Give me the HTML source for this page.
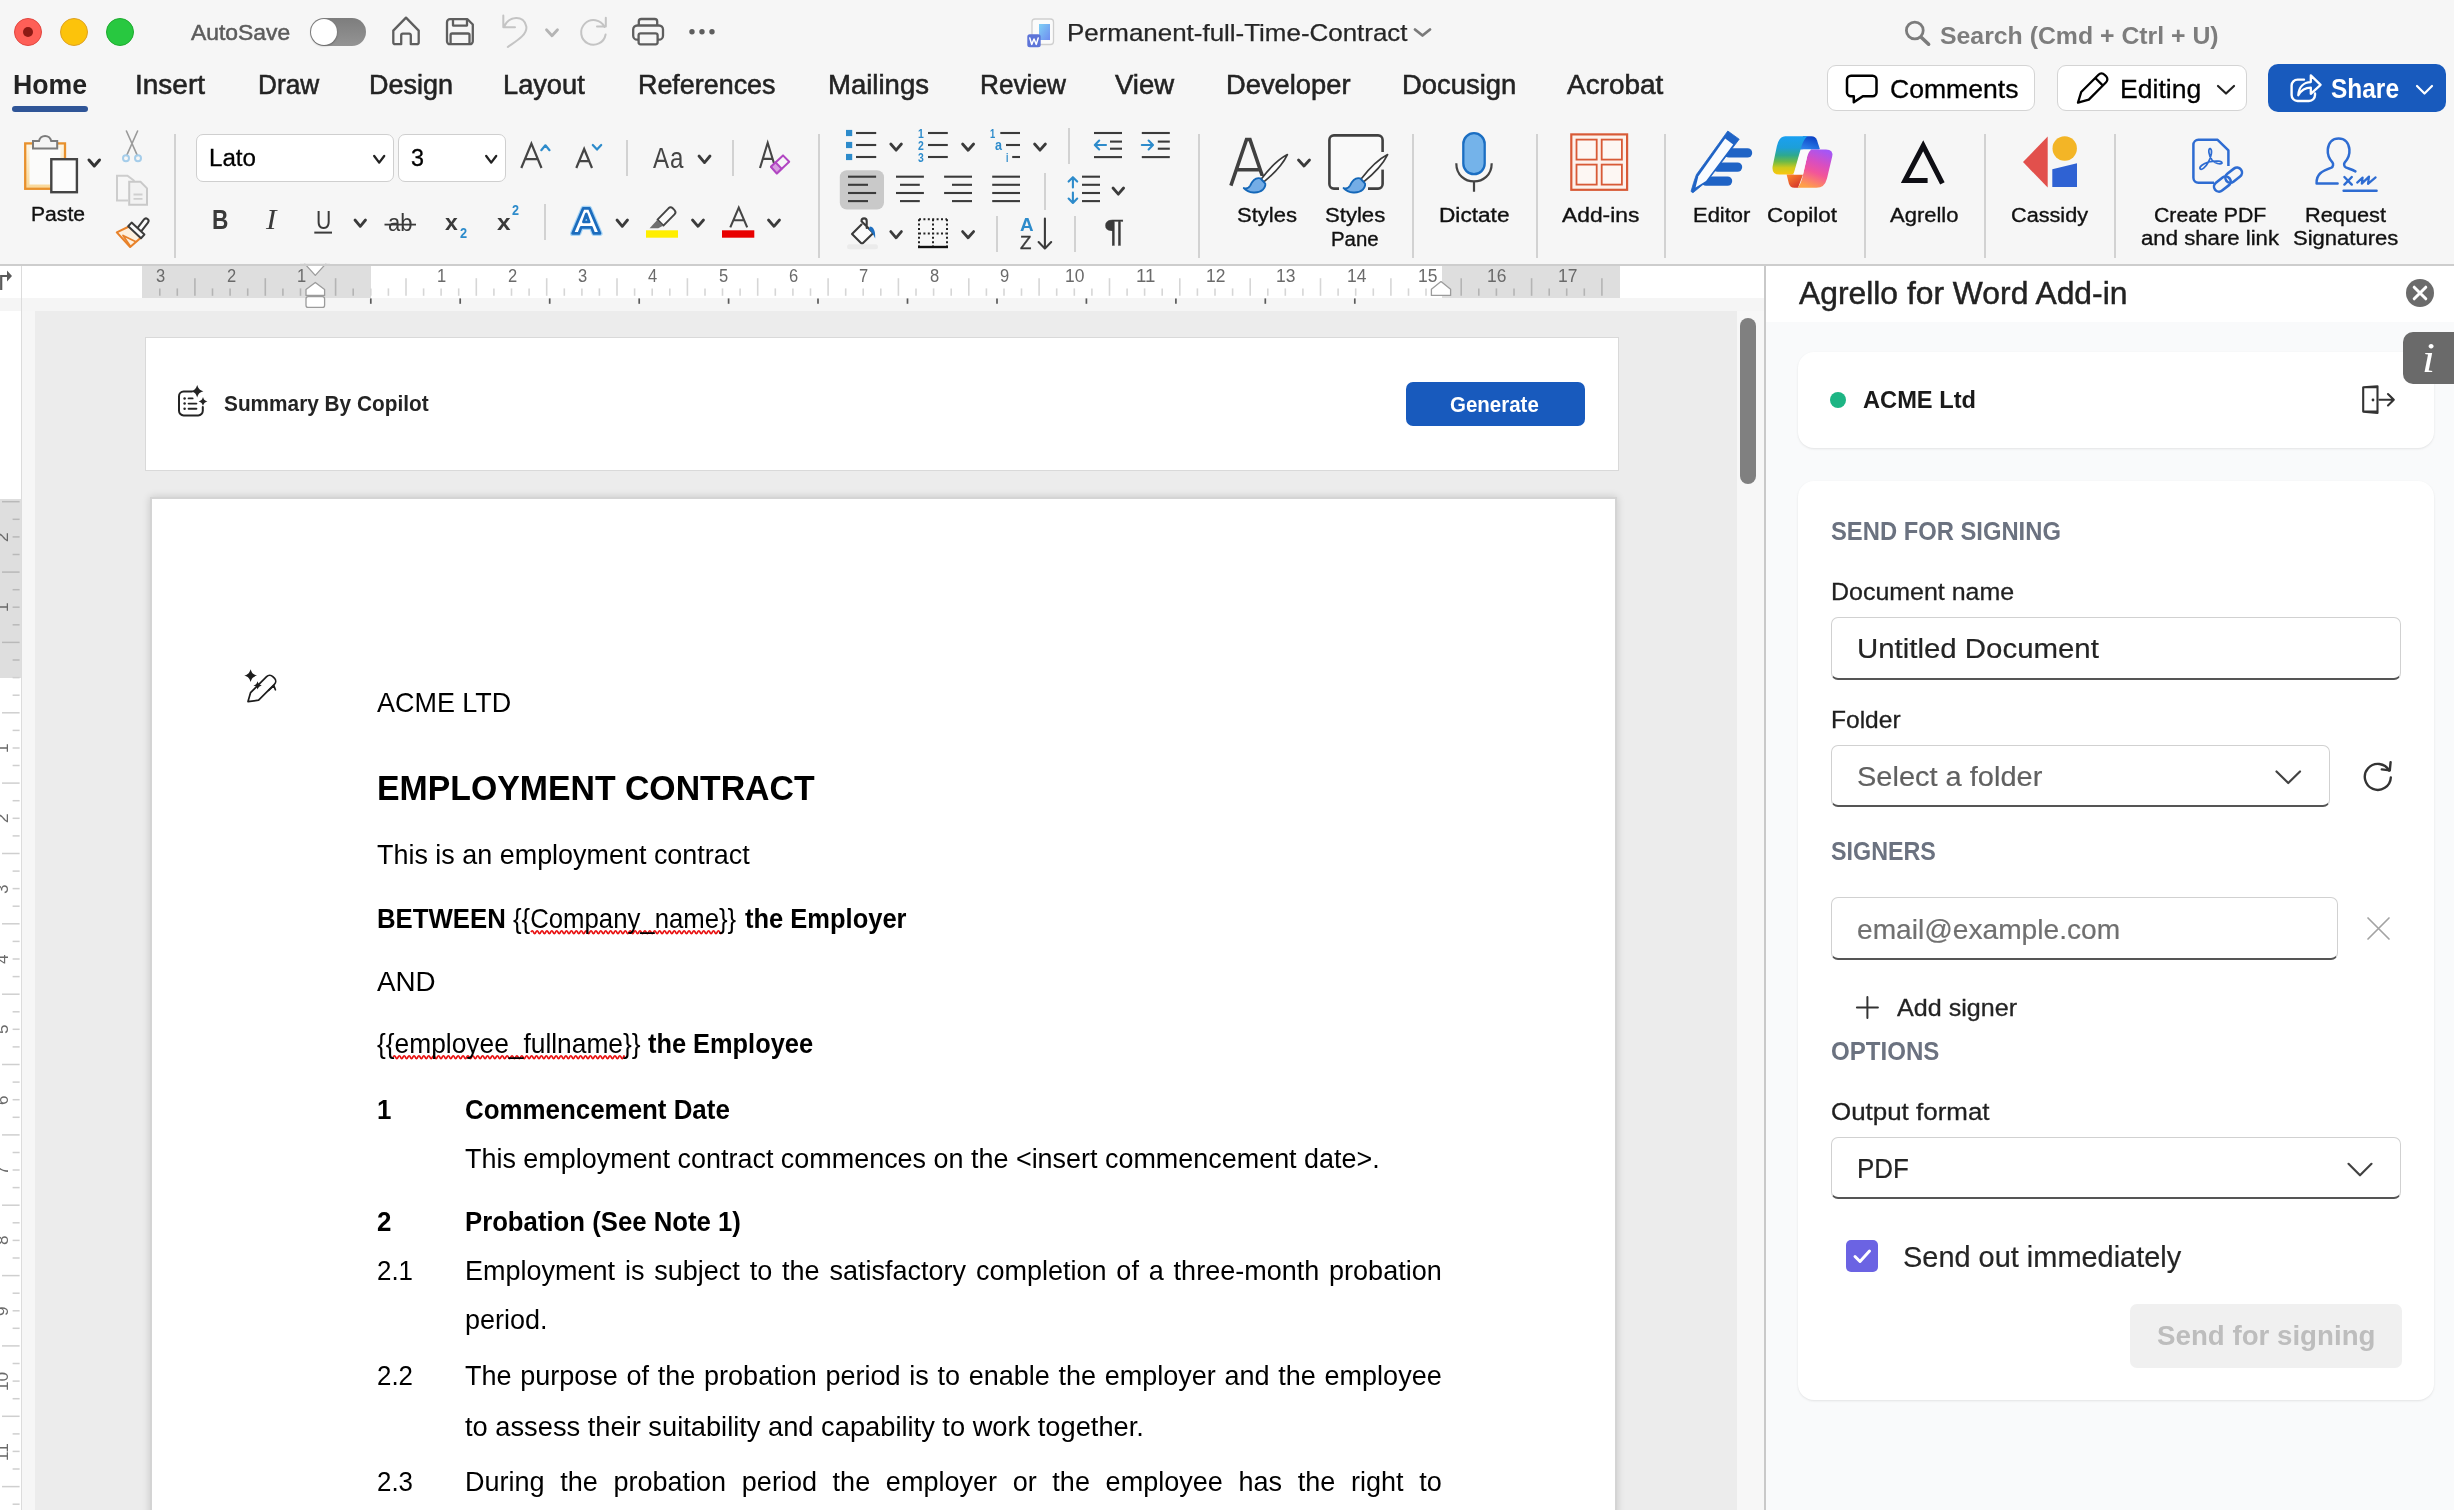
<!DOCTYPE html><html><head><meta charset="utf-8"><title>Word</title><style>

html,body{margin:0;padding:0;}
body{width:2454px;height:1510px;overflow:hidden;position:relative;background:#f6f6f6;font-family:"Liberation Sans", sans-serif;}
#root{will-change:transform;position:absolute;left:0;top:0;width:2454px;height:1510px;overflow:hidden;}
#root>div,#root>svg,#root>span{position:absolute;box-sizing:border-box;}
#root>svg{overflow:visible;}
.sf{font-family:"Liberation Serif", serif;}
.t{white-space:pre;line-height:1;transform-origin:0 0;display:block;}

</style></head><body><div id="root">
<div style="left:0px;top:0px;width:2454px;height:264px;background:#f6f6f6;"></div>
<div style="left:0px;top:263.5px;width:2454px;height:2.5px;background:#cdcdcd;"></div>
<div style="left:14px;top:18px;width:28px;height:28px;border-radius:50%;background:#fe5f57;border:1px solid #e2463f;"></div>
<div style="left:60px;top:18px;width:28px;height:28px;border-radius:50%;background:#fcc30b;border:1px solid #dea123;"></div>
<div style="left:106px;top:18px;width:28px;height:28px;border-radius:50%;background:#28c840;border:1px solid #1eab2f;"></div>
<div style="left:23px;top:27px;width:10px;height:10px;border-radius:50%;background:#8c1a14;"></div>
<div style="left:310px;top:18px;width:56px;height:28px;border-radius:14px;background:linear-gradient(180deg,#7d7d7d,#949494);"></div>
<div style="left:311px;top:19px;width:26px;height:26px;border-radius:50%;background:#fff;box-shadow:0 1px 2px rgba(0,0,0,.35);"></div>
<svg style="left:0;top:0" width="2454" height="1510"><polyline points="1415,29.5 1422.5,35.5 1430,29.5" fill="none" stroke="#7a7a7a" stroke-width="2.8" stroke-linecap="round" stroke-linejoin="round"/></svg>
<div style="left:12px;top:106px;width:76px;height:6px;background:#2f5597;border-radius:3px;"></div>
<div style="left:1827px;top:64.5px;width:207.5px;height:46.5px;background:#fff;border:1.5px solid #d4d4d4;border-radius:9px;"></div>
<div style="left:2057px;top:64.5px;width:190px;height:46.5px;background:#fff;border:1.5px solid #d4d4d4;border-radius:9px;"></div>
<svg style="left:0;top:0" width="2454" height="1510"><polyline points="2218,86 2226.0,93.5 2234,86" fill="none" stroke="#222" stroke-width="2.2" stroke-linecap="round" stroke-linejoin="round"/></svg>
<div style="left:2268px;top:64px;width:178px;height:48px;background:#185abd;border-radius:10px;"></div>
<svg style="left:0;top:0" width="2454" height="1510"><polyline points="2417,86 2424.5,93.5 2432,86" fill="none" stroke="#fff" stroke-width="2.2" stroke-linecap="round" stroke-linejoin="round"/></svg>
<div style="left:173.7px;top:134px;width:2px;height:123.5px;background:#d2d2d2;"></div>
<div style="left:818.0px;top:134px;width:2px;height:123.5px;background:#d2d2d2;"></div>
<div style="left:1198.4px;top:134px;width:2px;height:123.5px;background:#d2d2d2;"></div>
<div style="left:1411.9px;top:134px;width:2px;height:123.5px;background:#d2d2d2;"></div>
<div style="left:1536.0px;top:134px;width:2px;height:123.5px;background:#d2d2d2;"></div>
<div style="left:1664.2px;top:134px;width:2px;height:123.5px;background:#d2d2d2;"></div>
<div style="left:1864.0px;top:134px;width:2px;height:123.5px;background:#d2d2d2;"></div>
<div style="left:1984.0px;top:134px;width:2px;height:123.5px;background:#d2d2d2;"></div>
<div style="left:2113.9px;top:134px;width:2px;height:123.5px;background:#d2d2d2;"></div>
<div style="left:626.3px;top:140px;width:2px;height:36px;background:#d2d2d2;"></div>
<div style="left:732.2px;top:140px;width:2px;height:36px;background:#d2d2d2;"></div>
<div style="left:544.0px;top:204px;width:2px;height:36px;background:#d2d2d2;"></div>
<div style="left:1068.0px;top:128px;width:2px;height:36px;background:#d2d2d2;"></div>
<div style="left:1043.8px;top:172.5px;width:2px;height:37.0px;background:#d2d2d2;"></div>
<div style="left:995.7px;top:216px;width:2px;height:36px;background:#d2d2d2;"></div>
<div style="left:1073.7px;top:216px;width:2px;height:36px;background:#d2d2d2;"></div>
<div style="left:196px;top:134px;width:197.5px;height:47.5px;background:#fff;border:1.5px solid #cfcfcf;border-radius:7px;"></div>
<svg style="left:0;top:0" width="2454" height="1510"><polyline points="374.2,156 379.2,162.6 384.2,156" fill="none" stroke="#222" stroke-width="2.3" stroke-linecap="round" stroke-linejoin="round"/></svg>
<div style="left:398.3px;top:134px;width:107.3px;height:47.5px;background:#fff;border:1.5px solid #cfcfcf;border-radius:7px;"></div>
<svg style="left:0;top:0" width="2454" height="1510"><polyline points="486.2,156 491.2,162.6 496.2,156" fill="none" stroke="#222" stroke-width="2.3" stroke-linecap="round" stroke-linejoin="round"/></svg>
<div style="left:0px;top:266px;width:1764px;height:31.5px;background:#fff;"></div>
<div style="left:142.4px;top:266px;width:228.4px;height:31.5px;background:#dedede;"></div>
<div style="left:1442px;top:266px;width:177.8px;height:31.5px;background:#dedede;"></div>
<div style="left:0px;top:297.5px;width:1764px;height:13.5px;background:#f5f5f5;"></div>
<div style="left:0px;top:311px;width:21px;height:1199px;background:#fff;"></div>
<div style="left:0px;top:498.5px;width:21px;height:179.2px;background:#dedede;"></div>
<div style="left:20.5px;top:266px;width:1.2px;height:1244px;background:#dcdcdc;"></div>
<div style="left:21.7px;top:311px;width:13px;height:1199px;background:#f6f6f6;"></div>
<div style="left:34.5px;top:311px;width:1702.5px;height:1199px;background:#ececec;"></div>
<div style="left:1737px;top:311px;width:27px;height:1199px;background:#f7f7f7;"></div>
<div style="left:1740px;top:318px;width:16px;height:166px;background:#808080;border-radius:8px;"></div>
<div style="left:1764px;top:266px;width:2.2px;height:1244px;background:#c9c9c9;"></div>
<div style="left:145px;top:337px;width:1473.5px;height:134px;background:#fff;border:1.5px solid #d9d9d9;"></div>
<div style="left:1406px;top:382.3px;width:178.7px;height:43.4px;background:#185abd;border-radius:7px;"></div>
<div style="left:149.5px;top:497.2px;width:1467px;height:1032.8px;background:#fff;border:2px solid #d4d4d4;box-shadow:0 0 8px rgba(0,0,0,.16);"></div>
<div style="left:1766.2px;top:266px;width:687.8px;height:56px;background:#fff;"></div>
<div style="left:1766.2px;top:322px;width:687.8px;height:1188px;background:#f9fafb;"></div>
<div style="left:2406px;top:279px;width:28px;height:28px;border-radius:50%;background:#6b6b6b;"></div>
<div style="left:1798px;top:352px;width:636px;height:96px;background:#fff;border-radius:16px;box-shadow:0 1px 3px rgba(0,0,0,.06),0 1px 2px rgba(0,0,0,.04);"></div>
<div style="left:1830px;top:392px;width:16px;height:16px;border-radius:50%;background:#1db584;"></div>
<div style="left:1798px;top:480.5px;width:636px;height:919.5px;background:#fff;border-radius:16px;box-shadow:0 1px 3px rgba(0,0,0,.06),0 1px 2px rgba(0,0,0,.04);"></div>
<div style="left:2402.5px;top:332.3px;width:60px;height:51.5px;background:#6a6a6a;border-radius:10px;"></div>
<div style="left:1830.8px;top:617px;width:570.4px;height:62.5px;background:#fff;border:1.5px solid #d1d1d1;border-bottom:2px solid #555;border-radius:7px;"></div>
<div style="left:1830.8px;top:744.7px;width:499px;height:62.8px;background:#fff;border:1.5px solid #d1d1d1;border-bottom:2px solid #555;border-radius:7px;"></div>
<svg style="left:0;top:0" width="2454" height="1510"><polyline points="2276.5,771.5 2288.25,783 2300,771.5" fill="none" stroke="#424242" stroke-width="2.2" stroke-linecap="round" stroke-linejoin="round"/></svg>
<div style="left:1830.8px;top:897px;width:506.8px;height:62.5px;background:#fff;border:1.5px solid #d1d1d1;border-bottom:2px solid #555;border-radius:7px;"></div>
<div style="left:1830.8px;top:1137px;width:570.4px;height:62.3px;background:#fff;border:1.5px solid #d1d1d1;border-bottom:2px solid #555;border-radius:7px;"></div>
<svg style="left:0;top:0" width="2454" height="1510"><polyline points="2348.5,1163.8 2360.0,1175.3 2371.5,1163.8" fill="none" stroke="#424242" stroke-width="2.2" stroke-linecap="round" stroke-linejoin="round"/></svg>
<div style="left:1846px;top:1240px;width:32px;height:32px;background:#6b63e3;border-radius:5px;"></div>
<div style="left:2130px;top:1304px;width:272px;height:64px;background:#f0f0f0;border-radius:7px;"></div>
<span style="position:absolute;left:-6.5px;top:541.9px;font-size:17.2px;line-height:1;color:#6a6a6a;transform:rotate(-90deg);transform-origin:0 0;white-space:pre;">2</span>
<span style="position:absolute;left:-6.5px;top:612.2px;font-size:17.2px;line-height:1;color:#6a6a6a;transform:rotate(-90deg);transform-origin:0 0;white-space:pre;">1</span>
<span style="position:absolute;left:-6.5px;top:753.0px;font-size:17.2px;line-height:1;color:#6a6a6a;transform:rotate(-90deg);transform-origin:0 0;white-space:pre;">1</span>
<span style="position:absolute;left:-6.5px;top:823.3px;font-size:17.2px;line-height:1;color:#6a6a6a;transform:rotate(-90deg);transform-origin:0 0;white-space:pre;">2</span>
<span style="position:absolute;left:-6.5px;top:893.6px;font-size:17.2px;line-height:1;color:#6a6a6a;transform:rotate(-90deg);transform-origin:0 0;white-space:pre;">3</span>
<span style="position:absolute;left:-6.5px;top:964.0px;font-size:17.2px;line-height:1;color:#6a6a6a;transform:rotate(-90deg);transform-origin:0 0;white-space:pre;">4</span>
<span style="position:absolute;left:-6.5px;top:1034.3px;font-size:17.2px;line-height:1;color:#6a6a6a;transform:rotate(-90deg);transform-origin:0 0;white-space:pre;">5</span>
<span style="position:absolute;left:-6.5px;top:1104.7px;font-size:17.2px;line-height:1;color:#6a6a6a;transform:rotate(-90deg);transform-origin:0 0;white-space:pre;">6</span>
<span style="position:absolute;left:-6.5px;top:1175.0px;font-size:17.2px;line-height:1;color:#6a6a6a;transform:rotate(-90deg);transform-origin:0 0;white-space:pre;">7</span>
<span style="position:absolute;left:-6.5px;top:1245.4px;font-size:17.2px;line-height:1;color:#6a6a6a;transform:rotate(-90deg);transform-origin:0 0;white-space:pre;">8</span>
<span style="position:absolute;left:-6.5px;top:1315.8px;font-size:17.2px;line-height:1;color:#6a6a6a;transform:rotate(-90deg);transform-origin:0 0;white-space:pre;">9</span>
<span style="position:absolute;left:-6.5px;top:1391.1px;font-size:17.2px;line-height:1;color:#6a6a6a;transform:rotate(-90deg);transform-origin:0 0;white-space:pre;">10</span>
<span style="position:absolute;left:-6.5px;top:1461.4px;font-size:17.2px;line-height:1;color:#6a6a6a;transform:rotate(-90deg);transform-origin:0 0;white-space:pre;">11</span>
<svg style="left:0;top:0" width="2454" height="1510" viewBox="0 0 2454 1510"><defs><linearGradient id="gdoc" x1="0" y1="0" x2="1" y2="1"><stop offset="0" stop-color="#7fd0f5"/><stop offset="1" stop-color="#6f8cf0"/></linearGradient><linearGradient id="gclip" x1="0" y1="0" x2="0" y2="1"><stop offset="0" stop-color="#fdf6e6"/><stop offset="1" stop-color="#f9d796"/></linearGradient><linearGradient id="gcp1" x1="0" y1="0" x2="0" y2="1"><stop offset="0" stop-color="#1aa0f2"/><stop offset="0.3" stop-color="#1d9fd8"/><stop offset="0.5" stop-color="#2ea98e"/><stop offset="0.66" stop-color="#6cba48"/><stop offset="0.82" stop-color="#cfca1c"/><stop offset="1" stop-color="#fbc60c"/></linearGradient><linearGradient id="gcp2" x1="0.2" y1="1" x2="0.7" y2="0"><stop offset="0" stop-color="#2f86ec"/><stop offset="1" stop-color="#0a3fc4"/></linearGradient><linearGradient id="gcp3" x1="0.7" y1="0" x2="0.35" y2="1"><stop offset="0" stop-color="#a456f6"/><stop offset="0.35" stop-color="#d94ec0"/><stop offset="0.6" stop-color="#f2559a"/><stop offset="0.8" stop-color="#fa7a72"/><stop offset="1" stop-color="#fea048"/></linearGradient><linearGradient id="gcp4" x1="0" y1="0" x2="0.8" y2="1"><stop offset="0" stop-color="#ff8a2a"/><stop offset="1" stop-color="#d2302c"/></linearGradient></defs><path d="M393.3 30.6 L406 17.6 L418.7 30.6 V42.2 a2 2 0 0 1 -2 2 H410.8 V35.2 a1.6 1.6 0 0 0 -1.6 -1.6 H402.8 a1.6 1.6 0 0 0 -1.6 1.6 V44.2 H395.3 a2 2 0 0 1 -2 -2 Z" fill="none" stroke="#5e5e5e" stroke-width="2.3" stroke-linejoin="round"/><path d="M450 19.2 H467.5 L472.8 24.5 V41.2 a3 3 0 0 1 -3 3 H450 a3 3 0 0 1 -3 -3 V22.2 a3 3 0 0 1 3 -3 Z" fill="none" stroke="#5e5e5e" stroke-width="2.3" stroke-linejoin="round"/><path d="M453 19.5 V25.6 H467 V19.5 M450.6 44 V35 a1.5 1.5 0 0 1 1.5 -1.5 H468 a1.5 1.5 0 0 1 1.5 1.5 V44" fill="none" stroke="#5e5e5e" stroke-width="2.3" stroke-linejoin="round"/><path d="M503.3 15.5 V27.3 H515 M503.8 27 C509 15.5 524 14.5 526.3 26.5 C527.5 34.5 517 40.5 507.8 47" fill="none" stroke="#c4c4c4" stroke-width="2" stroke-linejoin="round" stroke-linecap="round"/><polyline points="546.5,29.8 552,35.8 557.5,29.8" fill="none" stroke="#b4b4b4" stroke-width="2.8" stroke-linecap="round" stroke-linejoin="round"/><path d="M604.5 27 A12.3 12.3 0 1 0 605.6 34.5 M597 26.6 H605.8 V17.8" fill="none" stroke="#c4c4c4" stroke-width="2" stroke-linejoin="round" stroke-linecap="round"/><path d="M638.8 25.5 V21.5 a2.5 2.5 0 0 1 2.5 -2.5 H654.7 a2.5 2.5 0 0 1 2.5 2.5 V25.5" fill="none" stroke="#5e5e5e" stroke-width="2.3"/><rect x="633.2" y="25.5" width="29.8" height="14.2" rx="4" fill="none" stroke="#5e5e5e" stroke-width="2.3"/><rect x="638.6" y="33.3" width="19" height="11" rx="2" fill="#f6f6f6" stroke="#5e5e5e" stroke-width="2.3"/><circle cx="692" cy="31.7" r="2.7" fill="#5e5e5e"/><circle cx="702" cy="31.7" r="2.7" fill="#5e5e5e"/><circle cx="712" cy="31.7" r="2.7" fill="#5e5e5e"/><rect x="1032" y="19" width="21.5" height="25.5" rx="3" fill="#fbfbfb" stroke="#cfcfcf" stroke-width="1.3"/><rect x="1039" y="24" width="11" height="16" fill="url(#gdoc)"/><rect x="1027.3" y="34.2" width="13.4" height="13" rx="2.5" fill="#5d74d8"/><path d="M1029.8 38 l1.9 6.4 l2.3 -5.4 l2.3 5.4 l1.9 -6.4" fill="none" stroke="#fff" stroke-width="1.5" stroke-linejoin="round" stroke-linecap="round"/><circle cx="1914.8" cy="30.5" r="8.4" fill="none" stroke="#7c7c7c" stroke-width="2.8"/><path d="M1921.2 37.2 L1928.6 44.2" stroke="#7c7c7c" stroke-width="3.6" stroke-linecap="round"/><path d="M1851 75.8 H1872.5 a4 4 0 0 1 4 4 V92.3 a4 4 0 0 1 -4 4 H1862.8 L1853.8 102.3 V96.3 H1851 a4 4 0 0 1 -4 -4 V79.8 a4 4 0 0 1 4 -4 Z" fill="none" stroke="#000" stroke-width="2.5" stroke-linejoin="round"/><path d="M2078 102.6 L2081.2 92 L2098.5 74.7 a4.2 4.2 0 0 1 6 0 l1.6 1.6 a4.2 4.2 0 0 1 0 6 L2088.8 99.6 Z M2095.3 78 L2102.7 85.4" fill="none" stroke="#000" stroke-width="2.3" stroke-linejoin="round"/><path d="M2304 79.6 H2297.6 a6 6 0 0 0 -6 6 V95 a6 6 0 0 0 6 6 H2309 a6 6 0 0 0 6 -6 V93.5" fill="none" stroke="#fff" stroke-width="2.4" stroke-linecap="round"/><path d="M2298.3 95.2 C2298.8 86.5 2304 82.3 2310.8 82.1 V75.4 L2320.6 84.8 L2310.8 93.8 V87.6 C2305.5 87.6 2301.5 89.6 2298.3 95.2 Z" fill="none" stroke="#fff" stroke-width="2.3" stroke-linejoin="round"/><path d="M2414.2 287.2 L2425.8 298.8 M2425.8 287.2 L2414.2 298.8" stroke="#fff" stroke-width="3" stroke-linecap="round"/><path d="M2377.5 390 V387.3 H2363.2 V411.6 H2377.5 V408.6 M2363.2 387.3 L2377.5 386.2 V413 L2363.2 411.6" fill="none" stroke="#333" stroke-width="2.1" stroke-linejoin="round"/><circle cx="2373" cy="400" r="1.4" fill="#333"/><path d="M2379.5 399.7 H2393.6 M2388 394 L2393.8 399.7 L2388 405.4" fill="none" stroke="#333" stroke-width="2.1" stroke-linecap="round" stroke-linejoin="round"/><path d="M2389.2 770.6 A13 13 0 1 0 2390.8 777.5" fill="none" stroke="#333" stroke-width="2.4" stroke-linecap="round"/><path d="M2381.8 769.4 L2389.8 770.4 L2390.6 762.2" fill="none" stroke="#333" stroke-width="2.4" stroke-linecap="round" stroke-linejoin="round"/><path d="M2368 918 L2389 939 M2389 918 L2368 939" stroke="#a3a3a3" stroke-width="1.7" stroke-linecap="round"/><path d="M1867.4 997 V1018 M1856.9 1007.5 H1877.9" stroke="#333" stroke-width="2" stroke-linecap="round"/><path d="M1855 1256.5 L1860 1261.5 L1869.5 1251" fill="none" stroke="#fff" stroke-width="3" stroke-linecap="round" stroke-linejoin="round"/><rect x="25.2" y="143.4" width="39.8" height="45.4" fill="url(#gclip)" stroke="#e8912d" stroke-width="2.3"/><rect x="29.5" y="148" width="31" height="36.5" fill="#fbfbfa"/><path d="M33 148.6 V141 H39 a6.2 6.2 0 0 1 12.2 0 H57.2 V148.6 Z" fill="#f4f4f4" stroke="#7b7b7b" stroke-width="2"/><rect x="51.3" y="159.2" width="25.6" height="33" fill="#fcfcfc" stroke="#444" stroke-width="2.4"/><polyline points="89,160 94.25,166 99.5,160" fill="none" stroke="#333" stroke-width="3" stroke-linecap="round" stroke-linejoin="round"/><path d="M126.4 131 L137.3 155.3 M137.6 131 L126.7 155.3" stroke="#9a9a9a" stroke-width="1.6" stroke-linecap="round"/><circle cx="126" cy="158.3" r="3" fill="none" stroke="#a5cdea" stroke-width="2"/><circle cx="138" cy="158.3" r="3" fill="none" stroke="#a5cdea" stroke-width="2"/><path d="M128 200.5 H117 V175.7 H127.5 L134.5 181" fill="none" stroke="#cdcdcd" stroke-width="2"/><path d="M129.2 181.8 H140.5 L147 188.3 V204.8 H129.2 Z" fill="#f2f2f2" stroke="#c9c9c9" stroke-width="2"/><path d="M133.5 194.5 H142.5 M133.5 198.8 H142.5" stroke="#cfcfcf" stroke-width="1.8"/><path d="M116.8 232.4 L130 226 L140.8 237.8 L130.2 247 Z" fill="#fdf0de" stroke="#e8822a" stroke-width="2.1" stroke-linejoin="round"/><path d="M123 235.4 L135.4 241.6 M123 235.4 L130.2 246" stroke="#e8822a" stroke-width="1.7" stroke-linecap="round"/><path d="M139.2 229.8 L146 221" stroke="#3b3b3b" stroke-width="7" stroke-linecap="round"/><path d="M139.2 229.8 L146 221" stroke="#fbfbfb" stroke-width="3" stroke-linecap="round"/><path d="M131.6 222.6 L144.4 234.6 L141 238.2 L128.2 226.2 Z" fill="#fbfbfb" stroke="#3b3b3b" stroke-width="2" stroke-linejoin="round"/><path d="M521.3 168 L531.4 143.6 L541.5 168 M524.9 159.2 H537.9" fill="none" stroke="#454545" stroke-width="2.2" stroke-linejoin="miter" stroke-miterlimit="8"/><polyline points="541.3,150.2 545.4,145.3 549.5,150.2" fill="none" stroke="#2d8bcb" stroke-width="2.2" stroke-linecap="round" stroke-linejoin="round"/><path d="M576.3 168 L584.15 149 L592 168 M579.1 161.2 H589.2" fill="none" stroke="#454545" stroke-width="2.2" stroke-linejoin="miter" stroke-miterlimit="8"/><polyline points="592.8,145 597,149.6 601.2,145" fill="none" stroke="#2d8bcb" stroke-width="2.2" stroke-linecap="round" stroke-linejoin="round"/><polyline points="699,156 704.5,162.6 710,156" fill="none" stroke="#3b3b3b" stroke-width="2.8" stroke-linecap="round" stroke-linejoin="round"/><path d="M760 168 L767.7 142.8 L775.4 168 M762.8 158.9 H772.6" fill="none" stroke="#454545" stroke-width="2.1" stroke-linejoin="miter" stroke-miterlimit="8"/><path d="M771 166.8 L783 155.4 L789.2 161.8 L776.8 173.4 Z" fill="#f6f6f6" stroke="#b146c2" stroke-width="2" stroke-linejoin="round"/><path d="M771 166.8 L775.6 162.4 L781.6 168.8 L776.8 173.4 Z" fill="#d79fe0" stroke="#b146c2" stroke-width="2" stroke-linejoin="round"/><polyline points="355,220 360.25,226.3 365.5,220" fill="none" stroke="#3b3b3b" stroke-width="2.8" stroke-linecap="round" stroke-linejoin="round"/><polyline points="617,220 622.25,226.3 627.5,220" fill="none" stroke="#3b3b3b" stroke-width="2.8" stroke-linecap="round" stroke-linejoin="round"/><polyline points="692.5,220 698.0,226.3 703.5,220" fill="none" stroke="#3b3b3b" stroke-width="2.8" stroke-linecap="round" stroke-linejoin="round"/><polyline points="768.5,220 774.0,226.3 779.5,220" fill="none" stroke="#3b3b3b" stroke-width="2.8" stroke-linecap="round" stroke-linejoin="round"/><path d="M384.5 224.6 H416" stroke="#3b3b3b" stroke-width="1.8"/><path d="M314.3 232.6 H332" stroke="#3b3b3b" stroke-width="2"/><path d="M572.6 233.4 L583.2 208.4 H589.4 L600 233.4 H593.8 L591.5 227.4 H581.1 L578.8 233.4 Z M583.4 222 H589.2 L586.3 214 Z" fill="none" stroke="#a6d4f5" stroke-width="5.2" stroke-linejoin="round"/><path d="M572.6 233.4 L583.2 208.4 H589.4 L600 233.4 H593.8 L591.5 227.4 H581.1 L578.8 233.4 Z M583.4 222 H589.2 L586.3 214 Z" fill="#fff" fill-rule="evenodd" stroke="#1c6cbd" stroke-width="2.7" stroke-linejoin="round"/><rect x="646" y="230.3" width="32" height="7.4" fill="#ffee00"/><path d="M657.5 219.6 L668.5 208.3 a3 3 0 0 1 4.2 0 l1.8 1.8 a3 3 0 0 1 0 4.2 L663.4 225.6 Z" fill="#fbfbfb" stroke="#444" stroke-width="1.9" stroke-linejoin="round"/><path d="M657.2 220 L663 225.8 L658.3 228.2 H649.6 Z" fill="#6f6f6f"/><path d="M730.3 227.4 L738.75 207.6 L747.2 227.4 M733.3 220.3 H744.2" fill="none" stroke="#454545" stroke-width="2.1" stroke-linejoin="miter" stroke-miterlimit="8"/><rect x="722" y="230.3" width="32.3" height="7.4" fill="#e80000"/><rect x="846" y="129.9" width="6.2" height="6.2" fill="#2d8bcb"/><path d="M856 133 H876.2" stroke="#3b3b3b" stroke-width="2.1"/><rect x="846" y="141.9" width="6.2" height="6.2" fill="#2d8bcb"/><path d="M856 145 H876.2" stroke="#3b3b3b" stroke-width="2.1"/><rect x="846" y="153.9" width="6.2" height="6.2" fill="#2d8bcb"/><path d="M856 157 H876.2" stroke="#3b3b3b" stroke-width="2.1"/><polyline points="890.8,144 896.0999999999999,150.2 901.4,144" fill="none" stroke="#3b3b3b" stroke-width="2.8" stroke-linecap="round" stroke-linejoin="round"/><path d="M928 133 H947.8" stroke="#3b3b3b" stroke-width="2.1"/><path d="M928 145 H947.8" stroke="#3b3b3b" stroke-width="2.1"/><path d="M928 157 H947.8" stroke="#3b3b3b" stroke-width="2.1"/><polyline points="962.6,144 968.1,150.2 973.6,144" fill="none" stroke="#3b3b3b" stroke-width="2.8" stroke-linecap="round" stroke-linejoin="round"/><path d="M1000.3 133 H1020" stroke="#3b3b3b" stroke-width="2.1"/><path d="M1006 145 H1020" stroke="#3b3b3b" stroke-width="2.1"/><path d="M1012.2 157 H1020" stroke="#3b3b3b" stroke-width="2.1"/><polyline points="1034.6,144 1040.0,150.2 1045.4,144" fill="none" stroke="#3b3b3b" stroke-width="2.8" stroke-linecap="round" stroke-linejoin="round"/><path d="M1094 133 H1122" stroke="#3b3b3b" stroke-width="2.1"/><path d="M1094 157.1 H1122" stroke="#3b3b3b" stroke-width="2.1"/><path d="M1110 141.6 H1122" stroke="#3b3b3b" stroke-width="2.1"/><path d="M1110 148.7 H1122" stroke="#3b3b3b" stroke-width="2.1"/><path d="M1106 145 H1095 M1099.2 140.6 L1094.8 145 L1099.2 149.4" fill="none" stroke="#2d8bcb" stroke-width="2.1" stroke-linecap="round" stroke-linejoin="round"/><path d="M1141.8 133 H1169.8" stroke="#3b3b3b" stroke-width="2.1"/><path d="M1141.8 157.1 H1169.8" stroke="#3b3b3b" stroke-width="2.1"/><path d="M1157.8 141.6 H1169.8" stroke="#3b3b3b" stroke-width="2.1"/><path d="M1157.8 148.7 H1169.8" stroke="#3b3b3b" stroke-width="2.1"/><path d="M1141.8 145 H1152.8 M1148.6 140.6 L1153.0 145 L1148.6 149.4" fill="none" stroke="#2d8bcb" stroke-width="2.1" stroke-linecap="round" stroke-linejoin="round"/><rect x="839.8" y="170.2" width="44.2" height="39.4" rx="7" fill="#c9c9c9"/><path d="M848 176.7 H876.1" stroke="#3b3b3b" stroke-width="2.1"/><path d="M896 176.7 H923.9" stroke="#3b3b3b" stroke-width="2.1"/><path d="M944.1 176.7 H972" stroke="#3b3b3b" stroke-width="2.1"/><path d="M992.2 176.7 H1020" stroke="#3b3b3b" stroke-width="2.1"/><path d="M1082 176.7 H1100" stroke="#3b3b3b" stroke-width="2.1"/><path d="M848 184.8 H868" stroke="#3b3b3b" stroke-width="2.1"/><path d="M900 184.8 H919.8" stroke="#3b3b3b" stroke-width="2.1"/><path d="M952 184.8 H972" stroke="#3b3b3b" stroke-width="2.1"/><path d="M992.2 184.8 H1020" stroke="#3b3b3b" stroke-width="2.1"/><path d="M1082 184.8 H1100" stroke="#3b3b3b" stroke-width="2.1"/><path d="M848 193 H876.1" stroke="#3b3b3b" stroke-width="2.1"/><path d="M896 193 H923.9" stroke="#3b3b3b" stroke-width="2.1"/><path d="M944.1 193 H972" stroke="#3b3b3b" stroke-width="2.1"/><path d="M992.2 193 H1020" stroke="#3b3b3b" stroke-width="2.1"/><path d="M1082 193 H1100" stroke="#3b3b3b" stroke-width="2.1"/><path d="M848 201.1 H868" stroke="#3b3b3b" stroke-width="2.1"/><path d="M900 201.1 H919.8" stroke="#3b3b3b" stroke-width="2.1"/><path d="M952 201.1 H972" stroke="#3b3b3b" stroke-width="2.1"/><path d="M992.2 201.1 H1020" stroke="#3b3b3b" stroke-width="2.1"/><path d="M1082 201.1 H1100" stroke="#3b3b3b" stroke-width="2.1"/><path d="M1072.9 177.4 V187.4 M1068.6 181.6 L1072.9 177.2 L1077.2 181.6 M1072.9 192.6 V202.8 M1068.6 198.6 L1072.9 203 L1077.2 198.6" fill="none" stroke="#2d8bcb" stroke-width="2.1" stroke-linecap="round" stroke-linejoin="round"/><polyline points="1113,188 1118.3,194.2 1123.6,188" fill="none" stroke="#3b3b3b" stroke-width="2.8" stroke-linecap="round" stroke-linejoin="round"/><path d="M861.5 224.6 L852 234 L862 244 L873.3 233 L861.5 221.2 V221 a2.6 2.6 0 0 1 5.2 0 V228" fill="#fbfbfb" stroke="#3b3b3b" stroke-width="2.1" stroke-linejoin="round" stroke-linecap="round"/><path d="M869.8 226.4 C873.5 226.6 875.6 230.5 875.2 238.5 C873.4 234.2 871.8 231.6 868.8 229.4 Z" fill="#1e6fc0"/><rect x="847" y="244.3" width="31" height="5" rx="2.5" fill="#ebebeb"/><polyline points="890.8,231.6 896.0999999999999,237.8 901.4,231.6" fill="none" stroke="#3b3b3b" stroke-width="2.8" stroke-linecap="round" stroke-linejoin="round"/><path d="M919 219.2 H947 M919 233.4 H947 M919 219.2 V246 M947 219.2 V246 M933 219.2 V246" fill="none" stroke="#222" stroke-width="2" stroke-dasharray="2 2.4"/><path d="M918 247 H948" stroke="#111" stroke-width="2.4"/><polyline points="962.6,231.6 968.1,237.8 973.6,231.6" fill="none" stroke="#3b3b3b" stroke-width="2.8" stroke-linecap="round" stroke-linejoin="round"/><path d="M1044.9 218.6 V248.4 M1038.6 242 L1044.9 248.6 L1051.2 242" fill="none" stroke="#3b3b3b" stroke-width="2.1" stroke-linecap="round" stroke-linejoin="round"/><path d="M1230.9 185.6 L1246.5 139.6 H1250 L1265.6 185.6 M1237.6 169.8 H1259" fill="none" stroke="#404040" stroke-width="3.5" stroke-linejoin="miter" stroke-miterlimit="10"/><rect x="1258" y="176" width="12" height="12" fill="#f6f6f6"/><path d="M1261.1 179.3 Q1274.6 161.3 1287.4 154.6 Q1281.2 167.7 1263.8 181.9 Z" fill="#fdfdfd" stroke="#3a3a3a" stroke-width="1.7" stroke-linejoin="round"/><path d="M1260.4 178.4 C1254.4 176.7 1251.5 182.7 1250.2 185.6 C1248.5 188.6 1245.5 188.8 1243.8 188.1 C1248.5 193.4 1258.3 193.9 1262.9 189.6 C1265.5 186.9 1265.9 183.5 1264.8 183.0 Z" fill="#74ade6" stroke="#1467b8" stroke-width="1.9" stroke-linejoin="round"/><polyline points="1298.5,160 1304.0,166 1309.5,160" fill="none" stroke="#3b3b3b" stroke-width="2.8" stroke-linecap="round" stroke-linejoin="round"/><rect x="1329.4" y="135.4" width="53.2" height="53.2" rx="4.5" fill="#f9f9f9" stroke="#404040" stroke-width="2.6"/><rect x="1339" y="180" width="29" height="12" fill="#f6f6f6"/><rect x="1380" y="152" width="6" height="17.6" fill="#f6f6f6"/><path d="M1360.9 179.3 Q1374.7 161.3 1387.6 154.6 Q1381.3 167.7 1363.6 181.9 Z" fill="#fdfdfd" stroke="#3a3a3a" stroke-width="1.7" stroke-linejoin="round"/><path d="M1360.2 178.4 C1354.2 176.7 1351.3 182.7 1350.0 185.6 C1348.3 188.6 1345.3 188.8 1343.6 188.1 C1348.3 193.4 1358.1 193.9 1362.8 189.6 C1365.3 186.9 1365.7 183.5 1364.6 183.0 Z" fill="#74ade6" stroke="#1467b8" stroke-width="1.9" stroke-linejoin="round"/><rect x="1463.3" y="133.2" width="21.4" height="41" rx="10.7" fill="#74b3ea" stroke="#1b6ec2" stroke-width="2.3"/><path d="M1456.3 163.2 C1456.3 187.5 1491.7 187.5 1491.7 163.2 M1474 181.4 V191.8" fill="none" stroke="#444" stroke-width="2.2" stroke-linecap="butt"/><rect x="1571.3" y="134.4" width="55.8" height="55.4" fill="#fdf2ec" stroke="#d85a36" stroke-width="2.2"/><rect x="1576.5" y="139.6" width="20.2" height="20" fill="#fdf7f3" stroke="#d85a36" stroke-width="1.8"/><rect x="1601.7" y="139.6" width="20.2" height="20" fill="#fdf7f3" stroke="#d85a36" stroke-width="1.8"/><rect x="1576.5" y="164.6" width="20.2" height="20" fill="#fdf7f3" stroke="#d85a36" stroke-width="1.8"/><rect x="1601.7" y="164.6" width="20.2" height="20" fill="#fdf7f3" stroke="#d85a36" stroke-width="1.8"/><path d="M1729 152.9 H1747.5" stroke="#1f63c5" stroke-width="9.4" stroke-linecap="round"/><path d="M1717.5 167.1 H1737.5" stroke="#1f63c5" stroke-width="9.4" stroke-linecap="round"/><path d="M1706 181.1 H1727.5" stroke="#1f63c5" stroke-width="9.4" stroke-linecap="round"/><path d="M1727.8 131 L1739.2 139.2 L1708 180.2 Q1700 187 1692.9 192.8 L1691 191.4 Q1693.6 182 1696.4 174.6 Z" fill="#1f63c5" stroke="#1f63c5" stroke-width="0.8" stroke-linejoin="round"/><path d="M1725.2 138.6 L1733.2 144.4 L1706 181 L1695.6 187.6 L1698.4 176.2 Z" fill="#fafcff"/><path d="M1803 136.2 H1811.4 Q1815.6 136.2 1817 140.2 L1819.6 148.2 Q1819.9 149.4 1818.4 149.4 H1799 Z" fill="url(#gcp2)"/><path d="M1785.2 136.2 H1807.6 Q1803.4 139.4 1801.4 146.6 L1794 172.6 Q1793.6 174.6 1791.4 174.6 H1779.4 Q1771.6 174.6 1772.6 166.4 L1776.8 146.6 Q1779 136.2 1785.2 136.2 Z" fill="url(#gcp1)"/><path d="M1786.6 174.6 H1803 L1798 187.8 H1794.4 Q1790 187.8 1788.8 183.2 Z" fill="url(#gcp4)"/><path d="M1811 149.4 H1826 Q1833.6 149.4 1832.2 156.6 L1827 178.4 Q1824.6 187.8 1816.4 187.8 H1797.4 Q1800.6 184.6 1802.4 177.4 L1807.4 155.6 Q1808.4 151.4 1811 149.4 Z" fill="url(#gcp3)"/><path d="M1803.6 149.4 H1811 Q1808.4 151.4 1807.4 155.6 L1803 174.6 H1793.6 Q1794.2 174 1794.6 172.6 L1800.6 151.6 Q1801.4 149.4 1803.6 149.4 Z" fill="#fbfbfb"/><path d="M1927.6 180.4 H1905 L1923.2 145.8 L1942.4 183.4" fill="none" stroke="#0e0e14" stroke-width="5" stroke-linejoin="miter" stroke-miterlimit="10" stroke-linecap="butt"/><path d="M2023 162 L2047.7 136.6 V187.6 Z" fill="#e2504c"/><circle cx="2064.7" cy="148.5" r="12.2" fill="#f3b526"/><path d="M2052.3 169.2 L2077 163.2 V187 H2052.3 Z" fill="#2f62d3"/><path d="M2214 182.8 H2198.4 a5 5 0 0 1 -5 -5 V144.8 a5 5 0 0 1 5 -5 H2217.6 L2228.4 150.4 V166" fill="none" stroke="#2e6cd2" stroke-width="2.5" stroke-linejoin="round"/><path d="M2200.2 169 C2198.6 166.6 2203.6 163.6 2208.4 162 C2211.4 156.4 2212.6 150.4 2210.4 148.6 C2207.8 148 2208.4 155.4 2212.2 160.2 C2215 163.4 2220.4 164.8 2222 163.2 C2222.6 161 2216 160.4 2208.4 162 C2205.4 167.6 2201.6 170.6 2200.2 169 Z" fill="none" stroke="#2e6cd2" stroke-width="1.7" stroke-linejoin="round"/><g transform="rotate(-38 2228 179.6)" fill="none" stroke="#2e6cd2" stroke-width="2.6"><rect x="2211.6" y="174.6" width="18.4" height="10" rx="5"/><rect x="2226" y="174.6" width="18.4" height="10" rx="5"/></g><path d="M2337.6 183.4 H2316.6 C2316.2 174 2322 171 2331.4 167.6 C2333.2 166.8 2333.6 163.8 2332.4 162.4 C2328 157.6 2327.6 151.6 2327.8 149.4 C2328.4 142.6 2332.6 138.4 2338.6 138.4 C2344.6 138.4 2348.8 142.6 2349.4 149.4 C2349.6 151.6 2349.2 157.6 2344.8 162.4 C2343.6 163.8 2344 166.6 2345.8 167.4 C2349.4 168.8 2352.4 169.6 2355.4 171.4" fill="none" stroke="#2e6cd2" stroke-width="2.5" stroke-linecap="round" stroke-linejoin="round"/><path d="M2344.4 177 L2351.8 184.6 M2351.8 177 L2344.4 184.6" stroke="#2e6cd2" stroke-width="2.4" stroke-linecap="round"/><path d="M2357.2 182.6 L2362.6 177.6 L2361.8 183.6 L2369 176.6 L2368 183.8 L2375.6 177.4" fill="none" stroke="#2e6cd2" stroke-width="2.2" stroke-linecap="round" stroke-linejoin="round"/><path d="M2343.6 190.8 H2376.6" stroke="#2e6cd2" stroke-width="2.4" stroke-linecap="round"/><path d="M159.8 288.4 V295.8" stroke="#b4b4b4" stroke-width="1.6"/><path d="M177.3 288.4 V295.8" stroke="#b4b4b4" stroke-width="1.6"/><path d="M194.9 278.2 V295.8" stroke="#b4b4b4" stroke-width="1.6"/><path d="M212.5 288.4 V295.8" stroke="#b4b4b4" stroke-width="1.6"/><path d="M230.1 288.4 V295.8" stroke="#b4b4b4" stroke-width="1.6"/><path d="M247.7 288.4 V295.8" stroke="#b4b4b4" stroke-width="1.6"/><path d="M265.3 278.2 V295.8" stroke="#b4b4b4" stroke-width="1.6"/><path d="M282.9 288.4 V295.8" stroke="#b4b4b4" stroke-width="1.6"/><path d="M300.5 288.4 V295.8" stroke="#b4b4b4" stroke-width="1.6"/><path d="M318.0 288.4 V295.8" stroke="#b4b4b4" stroke-width="1.6"/><path d="M335.6 278.2 V295.8" stroke="#b4b4b4" stroke-width="1.6"/><path d="M353.2 288.4 V295.8" stroke="#b4b4b4" stroke-width="1.6"/><path d="M370.8 288.4 V295.8" stroke="#d6d6d6" stroke-width="1.6"/><path d="M388.4 288.4 V295.8" stroke="#d6d6d6" stroke-width="1.6"/><path d="M406.0 278.2 V295.8" stroke="#d6d6d6" stroke-width="1.6"/><path d="M423.6 288.4 V295.8" stroke="#d6d6d6" stroke-width="1.6"/><path d="M441.1 288.4 V295.8" stroke="#d6d6d6" stroke-width="1.6"/><path d="M458.7 288.4 V295.8" stroke="#d6d6d6" stroke-width="1.6"/><path d="M476.3 278.2 V295.8" stroke="#d6d6d6" stroke-width="1.6"/><path d="M493.9 288.4 V295.8" stroke="#d6d6d6" stroke-width="1.6"/><path d="M511.5 288.4 V295.8" stroke="#d6d6d6" stroke-width="1.6"/><path d="M529.1 288.4 V295.8" stroke="#d6d6d6" stroke-width="1.6"/><path d="M546.7 278.2 V295.8" stroke="#d6d6d6" stroke-width="1.6"/><path d="M564.3 288.4 V295.8" stroke="#d6d6d6" stroke-width="1.6"/><path d="M581.9 288.4 V295.8" stroke="#d6d6d6" stroke-width="1.6"/><path d="M599.4 288.4 V295.8" stroke="#d6d6d6" stroke-width="1.6"/><path d="M617.0 278.2 V295.8" stroke="#d6d6d6" stroke-width="1.6"/><path d="M634.6 288.4 V295.8" stroke="#d6d6d6" stroke-width="1.6"/><path d="M652.2 288.4 V295.8" stroke="#d6d6d6" stroke-width="1.6"/><path d="M669.8 288.4 V295.8" stroke="#d6d6d6" stroke-width="1.6"/><path d="M687.4 278.2 V295.8" stroke="#d6d6d6" stroke-width="1.6"/><path d="M705.0 288.4 V295.8" stroke="#d6d6d6" stroke-width="1.6"/><path d="M722.5 288.4 V295.8" stroke="#d6d6d6" stroke-width="1.6"/><path d="M740.1 288.4 V295.8" stroke="#d6d6d6" stroke-width="1.6"/><path d="M757.7 278.2 V295.8" stroke="#d6d6d6" stroke-width="1.6"/><path d="M775.3 288.4 V295.8" stroke="#d6d6d6" stroke-width="1.6"/><path d="M792.9 288.4 V295.8" stroke="#d6d6d6" stroke-width="1.6"/><path d="M810.5 288.4 V295.8" stroke="#d6d6d6" stroke-width="1.6"/><path d="M828.1 278.2 V295.8" stroke="#d6d6d6" stroke-width="1.6"/><path d="M845.7 288.4 V295.8" stroke="#d6d6d6" stroke-width="1.6"/><path d="M863.2 288.4 V295.8" stroke="#d6d6d6" stroke-width="1.6"/><path d="M880.8 288.4 V295.8" stroke="#d6d6d6" stroke-width="1.6"/><path d="M898.4 278.2 V295.8" stroke="#d6d6d6" stroke-width="1.6"/><path d="M916.0 288.4 V295.8" stroke="#d6d6d6" stroke-width="1.6"/><path d="M933.6 288.4 V295.8" stroke="#d6d6d6" stroke-width="1.6"/><path d="M951.2 288.4 V295.8" stroke="#d6d6d6" stroke-width="1.6"/><path d="M968.8 278.2 V295.8" stroke="#d6d6d6" stroke-width="1.6"/><path d="M986.4 288.4 V295.8" stroke="#d6d6d6" stroke-width="1.6"/><path d="M1004.0 288.4 V295.8" stroke="#d6d6d6" stroke-width="1.6"/><path d="M1021.5 288.4 V295.8" stroke="#d6d6d6" stroke-width="1.6"/><path d="M1039.1 278.2 V295.8" stroke="#d6d6d6" stroke-width="1.6"/><path d="M1056.7 288.4 V295.8" stroke="#d6d6d6" stroke-width="1.6"/><path d="M1074.3 288.4 V295.8" stroke="#d6d6d6" stroke-width="1.6"/><path d="M1091.9 288.4 V295.8" stroke="#d6d6d6" stroke-width="1.6"/><path d="M1109.5 278.2 V295.8" stroke="#d6d6d6" stroke-width="1.6"/><path d="M1127.1 288.4 V295.8" stroke="#d6d6d6" stroke-width="1.6"/><path d="M1144.6 288.4 V295.8" stroke="#d6d6d6" stroke-width="1.6"/><path d="M1162.2 288.4 V295.8" stroke="#d6d6d6" stroke-width="1.6"/><path d="M1179.8 278.2 V295.8" stroke="#d6d6d6" stroke-width="1.6"/><path d="M1197.4 288.4 V295.8" stroke="#d6d6d6" stroke-width="1.6"/><path d="M1215.0 288.4 V295.8" stroke="#d6d6d6" stroke-width="1.6"/><path d="M1232.6 288.4 V295.8" stroke="#d6d6d6" stroke-width="1.6"/><path d="M1250.2 278.2 V295.8" stroke="#d6d6d6" stroke-width="1.6"/><path d="M1267.8 288.4 V295.8" stroke="#d6d6d6" stroke-width="1.6"/><path d="M1285.3 288.4 V295.8" stroke="#d6d6d6" stroke-width="1.6"/><path d="M1302.9 288.4 V295.8" stroke="#d6d6d6" stroke-width="1.6"/><path d="M1320.5 278.2 V295.8" stroke="#d6d6d6" stroke-width="1.6"/><path d="M1338.1 288.4 V295.8" stroke="#d6d6d6" stroke-width="1.6"/><path d="M1355.7 288.4 V295.8" stroke="#d6d6d6" stroke-width="1.6"/><path d="M1373.3 288.4 V295.8" stroke="#d6d6d6" stroke-width="1.6"/><path d="M1390.9 278.2 V295.8" stroke="#d6d6d6" stroke-width="1.6"/><path d="M1408.5 288.4 V295.8" stroke="#d6d6d6" stroke-width="1.6"/><path d="M1426.0 288.4 V295.8" stroke="#d6d6d6" stroke-width="1.6"/><path d="M1443.6 288.4 V295.8" stroke="#b4b4b4" stroke-width="1.6"/><path d="M1461.2 278.2 V295.8" stroke="#b4b4b4" stroke-width="1.6"/><path d="M1478.8 288.4 V295.8" stroke="#b4b4b4" stroke-width="1.6"/><path d="M1496.4 288.4 V295.8" stroke="#b4b4b4" stroke-width="1.6"/><path d="M1514.0 288.4 V295.8" stroke="#b4b4b4" stroke-width="1.6"/><path d="M1531.6 278.2 V295.8" stroke="#b4b4b4" stroke-width="1.6"/><path d="M1549.2 288.4 V295.8" stroke="#b4b4b4" stroke-width="1.6"/><path d="M1566.7 288.4 V295.8" stroke="#b4b4b4" stroke-width="1.6"/><path d="M1584.3 288.4 V295.8" stroke="#b4b4b4" stroke-width="1.6"/><path d="M1601.9 278.2 V295.8" stroke="#b4b4b4" stroke-width="1.6"/><path d="M370.8 298.4 V303.8" stroke="#5a5a5a" stroke-width="1.7"/><path d="M460.2 298.4 V303.8" stroke="#5a5a5a" stroke-width="1.7"/><path d="M549.7 298.4 V303.8" stroke="#5a5a5a" stroke-width="1.7"/><path d="M639.2 298.4 V303.8" stroke="#5a5a5a" stroke-width="1.7"/><path d="M728.6 298.4 V303.8" stroke="#5a5a5a" stroke-width="1.7"/><path d="M818.0 298.4 V303.8" stroke="#5a5a5a" stroke-width="1.7"/><path d="M907.5 298.4 V303.8" stroke="#5a5a5a" stroke-width="1.7"/><path d="M997.0 298.4 V303.8" stroke="#5a5a5a" stroke-width="1.7"/><path d="M1086.4 298.4 V303.8" stroke="#5a5a5a" stroke-width="1.7"/><path d="M1175.9 298.4 V303.8" stroke="#5a5a5a" stroke-width="1.7"/><path d="M1265.3 298.4 V303.8" stroke="#5a5a5a" stroke-width="1.7"/><path d="M1354.8 298.4 V303.8" stroke="#5a5a5a" stroke-width="1.7"/><path d="M304.4 263.4 L315.3 275.4 L326.2 263.4" fill="#fff" stroke="#9b9b9b" stroke-width="1.3" stroke-linejoin="round"/><rect x="300" y="263.5" width="30" height="2.5" fill="#cdcdcd"/><rect x="300" y="258" width="30" height="5.5" fill="#f6f6f6"/><path d="M315.3 282.4 L324.6 289.6 V295.4 H306 V289.6 Z" fill="#fff" stroke="#9b9b9b" stroke-width="1.3" stroke-linejoin="round"/><rect x="306" y="296.6" width="18.6" height="10.8" rx="2.2" fill="#fff" stroke="#9b9b9b" stroke-width="1.3" stroke-linejoin="round"/><path d="M1441 281.6 L1450.6 289.2 V295.4 H1431.4 V289.2 Z" fill="#fff" stroke="#9b9b9b" stroke-width="1.3" stroke-linejoin="round"/><path d="M1.2 290 V276 H8.5" fill="none" stroke="#5a5a5a" stroke-width="2.2"/><path d="M7 270.6 L12 276 L7 281.4 Z" fill="#5a5a5a"/><path d="M2 501.7 H19.6" stroke="#b9b9b9" stroke-width="1.5"/><path d="M12.6 519.3 H19.6" stroke="#b9b9b9" stroke-width="1.5"/><path d="M12.6 536.9 H19.6" stroke="#b9b9b9" stroke-width="1.5"/><path d="M12.6 554.5 H19.6" stroke="#b9b9b9" stroke-width="1.5"/><path d="M2 572.1 H19.6" stroke="#b9b9b9" stroke-width="1.5"/><path d="M12.6 589.7 H19.6" stroke="#b9b9b9" stroke-width="1.5"/><path d="M12.6 607.2 H19.6" stroke="#b9b9b9" stroke-width="1.5"/><path d="M12.6 624.8 H19.6" stroke="#b9b9b9" stroke-width="1.5"/><path d="M2 642.4 H19.6" stroke="#b9b9b9" stroke-width="1.5"/><path d="M12.6 660.0 H19.6" stroke="#b9b9b9" stroke-width="1.5"/><path d="M12.6 677.6 H19.6" stroke="#cfcfcf" stroke-width="1.5"/><path d="M12.6 695.2 H19.6" stroke="#cfcfcf" stroke-width="1.5"/><path d="M2 712.8 H19.6" stroke="#cfcfcf" stroke-width="1.5"/><path d="M12.6 730.4 H19.6" stroke="#cfcfcf" stroke-width="1.5"/><path d="M12.6 748.0 H19.6" stroke="#cfcfcf" stroke-width="1.5"/><path d="M12.6 765.5 H19.6" stroke="#cfcfcf" stroke-width="1.5"/><path d="M2 783.1 H19.6" stroke="#cfcfcf" stroke-width="1.5"/><path d="M12.6 800.7 H19.6" stroke="#cfcfcf" stroke-width="1.5"/><path d="M12.6 818.3 H19.6" stroke="#cfcfcf" stroke-width="1.5"/><path d="M12.6 835.9 H19.6" stroke="#cfcfcf" stroke-width="1.5"/><path d="M2 853.5 H19.6" stroke="#cfcfcf" stroke-width="1.5"/><path d="M12.6 871.1 H19.6" stroke="#cfcfcf" stroke-width="1.5"/><path d="M12.6 888.6 H19.6" stroke="#cfcfcf" stroke-width="1.5"/><path d="M12.6 906.2 H19.6" stroke="#cfcfcf" stroke-width="1.5"/><path d="M2 923.8 H19.6" stroke="#cfcfcf" stroke-width="1.5"/><path d="M12.6 941.4 H19.6" stroke="#cfcfcf" stroke-width="1.5"/><path d="M12.6 959.0 H19.6" stroke="#cfcfcf" stroke-width="1.5"/><path d="M12.6 976.6 H19.6" stroke="#cfcfcf" stroke-width="1.5"/><path d="M2 994.2 H19.6" stroke="#cfcfcf" stroke-width="1.5"/><path d="M12.6 1011.8 H19.6" stroke="#cfcfcf" stroke-width="1.5"/><path d="M12.6 1029.3 H19.6" stroke="#cfcfcf" stroke-width="1.5"/><path d="M12.6 1046.9 H19.6" stroke="#cfcfcf" stroke-width="1.5"/><path d="M2 1064.5 H19.6" stroke="#cfcfcf" stroke-width="1.5"/><path d="M12.6 1082.1 H19.6" stroke="#cfcfcf" stroke-width="1.5"/><path d="M12.6 1099.7 H19.6" stroke="#cfcfcf" stroke-width="1.5"/><path d="M12.6 1117.3 H19.6" stroke="#cfcfcf" stroke-width="1.5"/><path d="M2 1134.9 H19.6" stroke="#cfcfcf" stroke-width="1.5"/><path d="M12.6 1152.5 H19.6" stroke="#cfcfcf" stroke-width="1.5"/><path d="M12.6 1170.0 H19.6" stroke="#cfcfcf" stroke-width="1.5"/><path d="M12.6 1187.6 H19.6" stroke="#cfcfcf" stroke-width="1.5"/><path d="M2 1205.2 H19.6" stroke="#cfcfcf" stroke-width="1.5"/><path d="M12.6 1222.8 H19.6" stroke="#cfcfcf" stroke-width="1.5"/><path d="M12.6 1240.4 H19.6" stroke="#cfcfcf" stroke-width="1.5"/><path d="M12.6 1258.0 H19.6" stroke="#cfcfcf" stroke-width="1.5"/><path d="M2 1275.6 H19.6" stroke="#cfcfcf" stroke-width="1.5"/><path d="M12.6 1293.2 H19.6" stroke="#cfcfcf" stroke-width="1.5"/><path d="M12.6 1310.8 H19.6" stroke="#cfcfcf" stroke-width="1.5"/><path d="M12.6 1328.3 H19.6" stroke="#cfcfcf" stroke-width="1.5"/><path d="M2 1345.9 H19.6" stroke="#cfcfcf" stroke-width="1.5"/><path d="M12.6 1363.5 H19.6" stroke="#cfcfcf" stroke-width="1.5"/><path d="M12.6 1381.1 H19.6" stroke="#cfcfcf" stroke-width="1.5"/><path d="M12.6 1398.7 H19.6" stroke="#cfcfcf" stroke-width="1.5"/><path d="M2 1416.3 H19.6" stroke="#cfcfcf" stroke-width="1.5"/><path d="M12.6 1433.9 H19.6" stroke="#cfcfcf" stroke-width="1.5"/><path d="M12.6 1451.4 H19.6" stroke="#cfcfcf" stroke-width="1.5"/><path d="M12.6 1469.0 H19.6" stroke="#cfcfcf" stroke-width="1.5"/><path d="M2 1486.6 H19.6" stroke="#cfcfcf" stroke-width="1.5"/><path d="M12.6 1504.2 H19.6" stroke="#cfcfcf" stroke-width="1.5"/><path d="M192 391.6 H183.6 a4.6 4.6 0 0 0 -4.6 4.6 V410.8 a4.6 4.6 0 0 0 4.6 4.6 H198.2 a4.6 4.6 0 0 0 4.6 -4.6 V407" fill="none" stroke="#242424" stroke-width="2" stroke-linecap="round"/><circle cx="184.6" cy="398.4" r="1.25" fill="#242424"/><path d="M188.6 398.4 H192.6" stroke="#242424" stroke-width="1.9" stroke-linecap="round"/><circle cx="184.6" cy="403.6" r="1.25" fill="#242424"/><path d="M188.6 403.6 H196.4" stroke="#242424" stroke-width="1.9" stroke-linecap="round"/><circle cx="184.6" cy="408.8" r="1.25" fill="#242424"/><path d="M188.6 408.8 H196.4" stroke="#242424" stroke-width="1.9" stroke-linecap="round"/><path d="M197.2 385.0 C198.564 389.0176 199.3824 389.836 203.39999999999998 391.2 C199.3824 392.56399999999996 198.564 393.38239999999996 197.2 397.4 C195.83599999999998 393.38239999999996 195.0176 392.56399999999996 191.0 391.2 C195.0176 389.836 195.83599999999998 389.0176 197.2 385.0 Z" fill="#242424"/><path d="M203 397.0 C203.968 399.85119999999995 204.5488 400.43199999999996 207.4 401.4 C204.5488 402.368 203.968 402.9488 203 405.79999999999995 C202.032 402.9488 201.4512 402.368 198.6 401.4 C201.4512 400.43199999999996 202.032 399.85119999999995 203 397.0 Z" fill="#242424"/><path d="M248 701.6 L250.6 692.6 L266.6 676.6 a4.4 4.4 0 0 1 6.2 0 l1.6 1.6 a4.4 4.4 0 0 1 0 6.2 L258.6 700.2 Z" fill="none" stroke="#1c1c1c" stroke-width="1.7" stroke-linejoin="round"/><path d="M268.6 690.4 L273.8 685.6 L275.4 689.8" fill="none" stroke="#1c1c1c" stroke-width="1.7" stroke-linejoin="round" stroke-linecap="round"/><path d="M250.6 669.2 C252.00799999999998 673.3472 252.8528 674.192 257.0 675.6 C252.8528 677.008 252.00799999999998 677.8528 250.6 682.0 C249.192 677.8528 248.3472 677.008 244.2 675.6 C248.3472 674.192 249.192 673.3472 250.6 669.2 Z" fill="#1c1c1c"/><path d="M257.6 681.1999999999999 C258.524 683.9216 259.07840000000004 684.476 261.8 685.4 C259.07840000000004 686.324 258.524 686.8783999999999 257.6 689.6 C256.67600000000004 686.8783999999999 256.1216 686.324 253.40000000000003 685.4 C256.1216 684.476 256.67600000000004 683.9216 257.6 681.1999999999999 Z" fill="#1c1c1c"/><path d="M531 932.2 Q532.23 929.3000000000001 533.45 932.2 Q534.68 935.1 535.90 932.2 Q537.13 929.3000000000001 538.35 932.2 Q539.58 935.1 540.80 932.2 Q542.03 929.3000000000001 543.25 932.2 Q544.48 935.1 545.70 932.2 Q546.93 929.3000000000001 548.15 932.2 Q549.38 935.1 550.60 932.2 Q551.83 929.3000000000001 553.05 932.2 Q554.28 935.1 555.50 932.2 Q556.73 929.3000000000001 557.95 932.2 Q559.18 935.1 560.40 932.2 Q561.63 929.3000000000001 562.85 932.2 Q564.08 935.1 565.30 932.2 Q566.53 929.3000000000001 567.75 932.2 Q568.98 935.1 570.20 932.2 Q571.43 929.3000000000001 572.65 932.2 Q573.88 935.1 575.10 932.2 Q576.33 929.3000000000001 577.55 932.2 Q578.78 935.1 580.00 932.2 Q581.23 929.3000000000001 582.45 932.2 Q583.68 935.1 584.90 932.2 Q586.13 929.3000000000001 587.35 932.2 Q588.58 935.1 589.80 932.2 Q591.03 929.3000000000001 592.25 932.2 Q593.48 935.1 594.70 932.2 Q595.93 929.3000000000001 597.15 932.2 Q598.38 935.1 599.60 932.2 Q600.83 929.3000000000001 602.05 932.2 Q603.28 935.1 604.50 932.2 Q605.73 929.3000000000001 606.95 932.2 Q608.18 935.1 609.40 932.2 Q610.63 929.3000000000001 611.85 932.2 Q613.08 935.1 614.30 932.2 Q615.53 929.3000000000001 616.75 932.2 Q617.98 935.1 619.20 932.2 Q620.43 929.3000000000001 621.65 932.2 Q622.88 935.1 624.10 932.2 Q625.33 929.3000000000001 626.55 932.2 Q627.78 935.1 629.00 932.2 Q630.23 929.3000000000001 631.45 932.2 Q632.68 935.1 633.90 932.2 Q635.13 929.3000000000001 636.35 932.2 Q637.58 935.1 638.80 932.2 Q640.03 929.3000000000001 641.25 932.2 Q642.48 935.1 643.70 932.2 Q644.93 929.3000000000001 646.15 932.2 Q647.38 935.1 648.60 932.2 Q649.83 929.3000000000001 651.05 932.2 Q652.28 935.1 653.50 932.2 Q654.73 929.3000000000001 655.95 932.2 Q657.18 935.1 658.40 932.2 Q659.63 929.3000000000001 660.85 932.2 Q662.08 935.1 663.30 932.2 Q664.53 929.3000000000001 665.75 932.2 Q666.98 935.1 668.20 932.2 Q669.43 929.3000000000001 670.65 932.2 Q671.88 935.1 673.10 932.2 Q674.33 929.3000000000001 675.55 932.2 Q676.78 935.1 678.00 932.2 Q679.23 929.3000000000001 680.45 932.2 Q681.68 935.1 682.90 932.2 Q684.13 929.3000000000001 685.35 932.2 Q686.58 935.1 687.80 932.2 Q689.03 929.3000000000001 690.25 932.2 Q691.48 935.1 692.70 932.2 Q693.93 929.3000000000001 695.15 932.2 Q696.38 935.1 697.60 932.2 Q698.83 929.3000000000001 700.05 932.2 Q701.28 935.1 702.50 932.2 Q703.73 929.3000000000001 704.95 932.2 Q706.18 935.1 707.40 932.2 Q708.63 929.3000000000001 709.85 932.2 Q711.08 935.1 712.30 932.2 Q713.53 929.3000000000001 714.75 932.2 Q715.98 935.1 717.20 932.2 Q718.43 929.3000000000001 719.65 932.2 Q720.83 935.1 722.00 932.2" fill="none" stroke="#e81010" stroke-width="1.7"/><path d="M393.2 1057.2 Q394.42 1054.3 395.65 1057.2 Q396.88 1060.1000000000001 398.10 1057.2 Q399.32 1054.3 400.55 1057.2 Q401.77 1060.1000000000001 403.00 1057.2 Q404.22 1054.3 405.45 1057.2 Q406.67 1060.1000000000001 407.90 1057.2 Q409.12 1054.3 410.35 1057.2 Q411.57 1060.1000000000001 412.80 1057.2 Q414.02 1054.3 415.25 1057.2 Q416.47 1060.1000000000001 417.70 1057.2 Q418.92 1054.3 420.15 1057.2 Q421.37 1060.1000000000001 422.60 1057.2 Q423.82 1054.3 425.05 1057.2 Q426.27 1060.1000000000001 427.50 1057.2 Q428.72 1054.3 429.95 1057.2 Q431.17 1060.1000000000001 432.40 1057.2 Q433.62 1054.3 434.85 1057.2 Q436.07 1060.1000000000001 437.30 1057.2 Q438.52 1054.3 439.75 1057.2 Q440.97 1060.1000000000001 442.20 1057.2 Q443.42 1054.3 444.65 1057.2 Q445.87 1060.1000000000001 447.10 1057.2 Q448.32 1054.3 449.55 1057.2 Q450.77 1060.1000000000001 452.00 1057.2 Q453.22 1054.3 454.45 1057.2 Q455.67 1060.1000000000001 456.90 1057.2 Q458.12 1054.3 459.35 1057.2 Q460.57 1060.1000000000001 461.80 1057.2 Q463.02 1054.3 464.25 1057.2 Q465.47 1060.1000000000001 466.70 1057.2 Q467.92 1054.3 469.15 1057.2 Q470.37 1060.1000000000001 471.60 1057.2 Q472.82 1054.3 474.05 1057.2 Q475.27 1060.1000000000001 476.50 1057.2 Q477.72 1054.3 478.95 1057.2 Q480.17 1060.1000000000001 481.40 1057.2 Q482.62 1054.3 483.85 1057.2 Q485.07 1060.1000000000001 486.30 1057.2 Q487.52 1054.3 488.75 1057.2 Q489.97 1060.1000000000001 491.20 1057.2 Q492.42 1054.3 493.65 1057.2 Q494.87 1060.1000000000001 496.10 1057.2 Q497.32 1054.3 498.55 1057.2 Q499.77 1060.1000000000001 501.00 1057.2 Q502.22 1054.3 503.45 1057.2 Q504.67 1060.1000000000001 505.90 1057.2 Q507.12 1054.3 508.35 1057.2 Q509.57 1060.1000000000001 510.80 1057.2 Q512.02 1054.3 513.25 1057.2 Q514.47 1060.1000000000001 515.70 1057.2 Q516.92 1054.3 518.15 1057.2 Q519.37 1060.1000000000001 520.60 1057.2 Q521.82 1054.3 523.05 1057.2 Q524.27 1060.1000000000001 525.50 1057.2 Q526.72 1054.3 527.95 1057.2 Q529.17 1060.1000000000001 530.40 1057.2 Q531.62 1054.3 532.85 1057.2 Q534.07 1060.1000000000001 535.30 1057.2 Q536.52 1054.3 537.75 1057.2 Q538.97 1060.1000000000001 540.20 1057.2 Q541.42 1054.3 542.65 1057.2 Q543.88 1060.1000000000001 545.10 1057.2 Q546.33 1054.3 547.55 1057.2 Q548.78 1060.1000000000001 550.00 1057.2 Q551.23 1054.3 552.45 1057.2 Q553.68 1060.1000000000001 554.90 1057.2 Q556.13 1054.3 557.35 1057.2 Q558.58 1060.1000000000001 559.80 1057.2 Q561.03 1054.3 562.25 1057.2 Q563.48 1060.1000000000001 564.70 1057.2 Q565.93 1054.3 567.15 1057.2 Q568.38 1060.1000000000001 569.60 1057.2 Q570.83 1054.3 572.05 1057.2 Q573.28 1060.1000000000001 574.50 1057.2 Q575.73 1054.3 576.95 1057.2 Q578.18 1060.1000000000001 579.40 1057.2 Q580.63 1054.3 581.85 1057.2 Q583.08 1060.1000000000001 584.30 1057.2 Q585.53 1054.3 586.75 1057.2 Q587.98 1060.1000000000001 589.20 1057.2 Q590.43 1054.3 591.65 1057.2 Q592.88 1060.1000000000001 594.10 1057.2 Q595.33 1054.3 596.55 1057.2 Q597.78 1060.1000000000001 599.00 1057.2 Q600.23 1054.3 601.45 1057.2 Q602.68 1060.1000000000001 603.90 1057.2 Q605.13 1054.3 606.35 1057.2 Q607.58 1060.1000000000001 608.80 1057.2 Q610.03 1054.3 611.25 1057.2 Q612.48 1060.1000000000001 613.70 1057.2 Q614.93 1054.3 616.15 1057.2 Q617.38 1060.1000000000001 618.60 1057.2 Q619.83 1054.3 621.05 1057.2 Q622.28 1060.1000000000001 623.50 1057.2 Q623.95 1054.3 624.40 1057.2" fill="none" stroke="#e81010" stroke-width="1.7"/></svg>
<span class="t" style="left:190.8px;top:22.12px;font-size:22.36px;font-weight:400;color:#5c5c5c;-webkit-text-stroke:0.5px #5c5c5c;transform:scaleX(1.0230);">AutoSave</span>
<span class="t" style="left:1066.5px;top:21.50px;font-size:23.4px;font-weight:400;color:#262626;-webkit-text-stroke:0.25px #262626;transform:scaleX(1.1084);">Permanent-full-Time-Contract</span>
<span class="t" style="left:1940px;top:24.70px;font-size:23.71px;font-weight:700;color:#7d7d7d;transform:scaleX(1.0471);">Search (Cmd + Ctrl + U)</span>
<span class="t" style="left:13px;top:72.31px;font-size:26.83px;font-weight:700;color:#232323;transform:scaleX(0.9927);">Home</span>
<span class="t" style="left:135.3px;top:72.31px;font-size:26.83px;font-weight:400;color:#232323;-webkit-text-stroke:0.55px #232323;transform:scaleX(1.0431);">Insert</span>
<span class="t" style="left:257.5px;top:72.31px;font-size:26.83px;font-weight:400;color:#232323;-webkit-text-stroke:0.55px #232323;transform:scaleX(0.9775);">Draw</span>
<span class="t" style="left:369px;top:72.31px;font-size:26.83px;font-weight:400;color:#232323;-webkit-text-stroke:0.55px #232323;transform:scaleX(1.0058);">Design</span>
<span class="t" style="left:503.3px;top:72.31px;font-size:26.83px;font-weight:400;color:#232323;-webkit-text-stroke:0.55px #232323;transform:scaleX(1.0141);">Layout</span>
<span class="t" style="left:637.5px;top:72.31px;font-size:26.83px;font-weight:400;color:#232323;-webkit-text-stroke:0.55px #232323;transform:scaleX(1.0022);">References</span>
<span class="t" style="left:827.7px;top:72.31px;font-size:26.83px;font-weight:400;color:#232323;-webkit-text-stroke:0.55px #232323;transform:scaleX(1.0264);">Mailings</span>
<span class="t" style="left:979.8px;top:72.31px;font-size:26.83px;font-weight:400;color:#232323;-webkit-text-stroke:0.55px #232323;transform:scaleX(0.9765);">Review</span>
<span class="t" style="left:1114.8px;top:72.31px;font-size:26.83px;font-weight:400;color:#232323;-webkit-text-stroke:0.55px #232323;transform:scaleX(1.0265);">View</span>
<span class="t" style="left:1225.5px;top:72.31px;font-size:26.83px;font-weight:400;color:#232323;-webkit-text-stroke:0.55px #232323;transform:scaleX(1.0180);">Developer</span>
<span class="t" style="left:1401.7px;top:72.31px;font-size:26.83px;font-weight:400;color:#232323;-webkit-text-stroke:0.55px #232323;transform:scaleX(1.0218);">Docusign</span>
<span class="t" style="left:1567px;top:72.31px;font-size:26.83px;font-weight:400;color:#232323;-webkit-text-stroke:0.55px #232323;transform:scaleX(1.0414);">Acrobat</span>
<span class="t" style="left:1889.5px;top:75.51px;font-size:26.0px;font-weight:400;color:#000;-webkit-text-stroke:0.3px #000;transform:scaleX(1.0222);">Comments</span>
<span class="t" style="left:2119.5px;top:75.61px;font-size:26.0px;font-weight:400;color:#000;-webkit-text-stroke:0.3px #000;transform:scaleX(1.0214);">Editing</span>
<span class="t" style="left:2331px;top:75.61px;font-size:27.04px;font-weight:700;color:#fff;transform:scaleX(0.9050);">Share</span>
<span class="t" style="left:31px;top:204.40px;font-size:20.59px;font-weight:400;color:#111;-webkit-text-stroke:0.35px #111;transform:scaleX(1.0261);">Paste</span>
<span class="t" style="left:1236.8px;top:204.70px;font-size:20.59px;font-weight:400;color:#111;-webkit-text-stroke:0.35px #111;transform:scaleX(1.0705);">Styles</span>
<span class="t" style="left:1324.8px;top:204.70px;font-size:20.59px;font-weight:400;color:#111;-webkit-text-stroke:0.35px #111;transform:scaleX(1.0741);">Styles</span>
<span class="t" style="left:1330.7px;top:228.51px;font-size:20.59px;font-weight:400;color:#111;-webkit-text-stroke:0.35px #111;transform:scaleX(0.9925);">Pane</span>
<span class="t" style="left:1439px;top:204.70px;font-size:20.59px;font-weight:400;color:#111;-webkit-text-stroke:0.35px #111;transform:scaleX(1.1008);">Dictate</span>
<span class="t" style="left:1562px;top:204.70px;font-size:20.59px;font-weight:400;color:#111;-webkit-text-stroke:0.35px #111;transform:scaleX(1.1077);">Add-ins</span>
<span class="t" style="left:1693.2px;top:204.61px;font-size:20.59px;font-weight:400;color:#111;-webkit-text-stroke:0.35px #111;transform:scaleX(1.0657);">Editor</span>
<span class="t" style="left:1767px;top:204.61px;font-size:20.59px;font-weight:400;color:#111;-webkit-text-stroke:0.35px #111;transform:scaleX(1.0927);">Copilot</span>
<span class="t" style="left:1890px;top:204.61px;font-size:20.59px;font-weight:400;color:#111;-webkit-text-stroke:0.35px #111;transform:scaleX(1.0693);">Agrello</span>
<span class="t" style="left:2011px;top:204.61px;font-size:20.59px;font-weight:400;color:#111;-webkit-text-stroke:0.35px #111;transform:scaleX(1.0519);">Cassidy</span>
<span class="t" style="left:2153.5px;top:204.51px;font-size:20.59px;font-weight:400;color:#111;-webkit-text-stroke:0.35px #111;transform:scaleX(1.0337);">Create PDF</span>
<span class="t" style="left:2140.7px;top:228.31px;font-size:20.59px;font-weight:400;color:#111;-webkit-text-stroke:0.35px #111;transform:scaleX(1.0771);">and share link</span>
<span class="t" style="left:2305.4px;top:204.51px;font-size:20.59px;font-weight:400;color:#111;-webkit-text-stroke:0.35px #111;transform:scaleX(1.0567);">Request</span>
<span class="t" style="left:2292.9px;top:228.31px;font-size:20.59px;font-weight:400;color:#111;-webkit-text-stroke:0.35px #111;transform:scaleX(1.0702);">Signatures</span>
<span class="t" style="left:209px;top:146.00px;font-size:24.23px;font-weight:400;color:#000;-webkit-text-stroke:0.3px #000;transform:scaleX(0.9970);">Lato</span>
<span class="t" style="left:411px;top:146.00px;font-size:24.23px;font-weight:400;color:#000;-webkit-text-stroke:0.3px #000;transform:scaleX(0.9641);">3</span>
<span class="t" style="left:224.4px;top:391.91px;font-size:22.67px;font-weight:700;color:#242424;transform:scaleX(0.9182);">Summary By Copilot</span>
<span class="t" style="left:1450.1px;top:394.00px;font-size:22.15px;font-weight:700;color:#fff;transform:scaleX(0.9250);">Generate</span>
<span class="t" style="left:376.6px;top:687.81px;font-size:28.29px;font-weight:400;color:#000;transform:scaleX(0.9531);">ACME LTD</span>
<span class="t" style="left:376.6px;top:769.81px;font-size:35.05px;font-weight:700;color:#000;transform:scaleX(0.9646);">EMPLOYMENT CONTRACT</span>
<span class="t" style="left:376.6px;top:839.61px;font-size:28.29px;font-weight:400;color:#000;transform:scaleX(0.9522);">This is an employment contract</span>
<span class="t" style="left:376.6px;top:904.20px;font-size:28.29px;font-weight:700;color:#000;transform:scaleX(0.9109);">BETWEEN</span>
<span class="t" style="left:513.4px;top:904.20px;font-size:28.29px;font-weight:400;color:#000;transform:scaleX(0.9099);">{{Company_name}}</span>
<span class="t" style="left:744.5px;top:904.20px;font-size:28.29px;font-weight:700;color:#000;transform:scaleX(0.9014);">the Employer</span>
<span class="t" style="left:376.6px;top:966.92px;font-size:28.29px;font-weight:400;color:#000;transform:scaleX(0.9829);">AND</span>
<span class="t" style="left:376.6px;top:1029.01px;font-size:28.29px;font-weight:400;color:#000;transform:scaleX(0.9313);">{{employee_fullname}}</span>
<span class="t" style="left:648.4px;top:1029.01px;font-size:28.29px;font-weight:700;color:#000;transform:scaleX(0.8973);">the Employee</span>
<span class="t" style="left:376.6px;top:1095.11px;font-size:28.29px;font-weight:700;color:#000;transform:scaleX(0.9152);">1</span>
<span class="t" style="left:465px;top:1095.11px;font-size:28.29px;font-weight:700;color:#000;transform:scaleX(0.9157);">Commencement Date</span>
<span class="t" style="left:465px;top:1143.92px;font-size:28.29px;font-weight:400;color:#000;transform:scaleX(0.9524);">This employment contract commences on the &lt;insert commencement date&gt;.</span>
<span class="t" style="left:376.6px;top:1207.31px;font-size:28.29px;font-weight:700;color:#000;transform:scaleX(0.9152);">2</span>
<span class="t" style="left:465px;top:1207.31px;font-size:28.29px;font-weight:700;color:#000;transform:scaleX(0.9094);">Probation (See Note 1)</span>
<span class="t" style="left:376.6px;top:1255.70px;font-size:28.29px;font-weight:400;color:#000;transform:scaleX(0.9154);">2.1</span>
<span class="t" style="left:465px;top:1255.70px;font-size:28.29px;font-weight:400;color:#000;transform:scaleX(0.9550);word-spacing:2.452px;">Employment is subject to the satisfactory completion of a three-month probation</span>
<span class="t" style="left:465px;top:1305.20px;font-size:28.29px;font-weight:400;color:#000;transform:scaleX(0.9539);">period.</span>
<span class="t" style="left:376.6px;top:1361.42px;font-size:28.29px;font-weight:400;color:#000;transform:scaleX(0.9154);">2.2</span>
<span class="t" style="left:465px;top:1361.42px;font-size:28.29px;font-weight:400;color:#000;transform:scaleX(0.9550);word-spacing:1.268px;">The purpose of the probation period is to enable the employer and the employee</span>
<span class="t" style="left:465px;top:1411.61px;font-size:28.29px;font-weight:400;color:#000;transform:scaleX(0.9640);">to assess their suitability and capability to work together.</span>
<span class="t" style="left:376.6px;top:1467.31px;font-size:28.29px;font-weight:400;color:#000;transform:scaleX(0.9154);">2.3</span>
<span class="t" style="left:465px;top:1467.31px;font-size:28.29px;font-weight:400;color:#000;transform:scaleX(0.9550);word-spacing:8.585px;">During the probation period the employer or the employee has the right to</span>
<span class="t" style="left:1799.3px;top:278.31px;font-size:30.47px;font-weight:400;color:#222;-webkit-text-stroke:0.45px #222;transform:scaleX(1.0444);">Agrello for Word Add-in</span>
<span class="t" style="left:1862.6px;top:388.00px;font-size:24.75px;font-weight:700;color:#1a1a1a;transform:scaleX(0.9557);">ACME Ltd</span>
<span class="t sf" style="left:2421.5px;top:338.20px;font-size:41.6px;font-weight:400;color:#fff;font-style:italic;transform:scaleX(1.1243);">i</span>
<span class="t" style="left:1830.8px;top:519.31px;font-size:25.58px;font-weight:700;color:#6b7280;transform:scaleX(0.9297);">SEND FOR SIGNING</span>
<span class="t" style="left:1830.8px;top:839.00px;font-size:25.58px;font-weight:700;color:#6b7280;transform:scaleX(0.9111);">SIGNERS</span>
<span class="t" style="left:1830.8px;top:1039.20px;font-size:25.58px;font-weight:700;color:#6b7280;transform:scaleX(0.9416);">OPTIONS</span>
<span class="t" style="left:1830.8px;top:579.51px;font-size:24.13px;font-weight:400;color:#1f1f1f;-webkit-text-stroke:0.3px #1f1f1f;transform:scaleX(1.0349);">Document name</span>
<span class="t" style="left:1830.8px;top:707.51px;font-size:24.13px;font-weight:400;color:#1f1f1f;-webkit-text-stroke:0.3px #1f1f1f;transform:scaleX(1.0177);">Folder</span>
<span class="t" style="left:1830.8px;top:1100.01px;font-size:24.13px;font-weight:400;color:#1f1f1f;-webkit-text-stroke:0.3px #1f1f1f;transform:scaleX(1.0746);">Output format</span>
<span class="t" style="left:1856.7px;top:633.70px;font-size:28.29px;font-weight:400;color:#242424;-webkit-text-stroke:0.2px #242424;transform:scaleX(1.0397);">Untitled Document</span>
<span class="t" style="left:1856.7px;top:761.51px;font-size:28.29px;font-weight:400;color:#616161;-webkit-text-stroke:0.2px #616161;transform:scaleX(1.0249);">Select a folder</span>
<span class="t" style="left:1856.7px;top:914.70px;font-size:28.29px;font-weight:400;color:#707070;-webkit-text-stroke:0.2px #707070;transform:scaleX(0.9948);">email@example.com</span>
<span class="t" style="left:1897px;top:995.71px;font-size:24.13px;font-weight:400;color:#242424;-webkit-text-stroke:0.3px #242424;transform:scaleX(1.0404);">Add signer</span>
<span class="t" style="left:1856.7px;top:1154.42px;font-size:28.29px;font-weight:400;color:#242424;-webkit-text-stroke:0.2px #242424;transform:scaleX(0.9176);">PDF</span>
<span class="t" style="left:1902.8px;top:1241.71px;font-size:29.43px;font-weight:400;color:#242424;-webkit-text-stroke:0.2px #242424;transform:scaleX(0.9833);">Send out immediately</span>
<span class="t" style="left:2156.9px;top:1321.31px;font-size:28.29px;font-weight:700;color:#bdbdbd;transform:scaleX(0.9793);">Send for signing</span>
<span class="t" style="left:212.4px;top:206.01px;font-size:27.56px;font-weight:700;color:#3a3a3a;transform:scaleX(0.8239);">B</span>
<span class="t sf" style="left:266.2px;top:205.00px;font-size:29.12px;font-weight:400;color:#3a3a3a;font-style:italic;transform:scaleX(1.0769);">I</span>
<span class="t" style="left:315.5px;top:207.00px;font-size:26.52px;font-weight:400;color:#3a3a3a;transform:scaleX(0.7987);">U</span>
<span class="t" style="left:388px;top:211.00px;font-size:23.92px;font-weight:400;color:#3a3a3a;transform:scaleX(0.9213);">ab</span>
<span class="t" style="left:445.2px;top:211.61px;font-size:22.05px;font-weight:700;color:#3a3a3a;transform:scaleX(1.0436);">x</span>
<span class="t" style="left:459.5px;top:225.60px;font-size:14.04px;font-weight:700;color:#2d8bcb;transform:scaleX(0.9088);">2</span>
<span class="t" style="left:497px;top:211.61px;font-size:22.05px;font-weight:700;color:#3a3a3a;transform:scaleX(1.1088);">x</span>
<span class="t" style="left:512px;top:203.40px;font-size:14.04px;font-weight:700;color:#2d8bcb;transform:scaleX(0.8960);">2</span>
<span class="t" style="left:653.4px;top:144.01px;font-size:28.6px;font-weight:400;color:#454545;transform:scaleX(0.8436);letter-spacing:1px;">Aa</span>
<span class="t" style="left:917.8px;top:126.60px;font-size:13.31px;font-weight:700;color:#2d8bcb;transform:scaleX(0.7831);">1</span>
<span class="t" style="left:917.8px;top:138.60px;font-size:13.31px;font-weight:700;color:#2d8bcb;transform:scaleX(0.7831);">2</span>
<span class="t" style="left:917.8px;top:150.82px;font-size:13.31px;font-weight:700;color:#2d8bcb;transform:scaleX(0.7831);">3</span>
<span class="t" style="left:990.2px;top:126.60px;font-size:13.31px;font-weight:700;color:#2d8bcb;transform:scaleX(0.7021);">1</span>
<span class="t" style="left:995px;top:137.02px;font-size:15.08px;font-weight:700;color:#2d8bcb;transform:scaleX(0.8343);">a</span>
<span class="t" style="left:1006.2px;top:150.82px;font-size:13.31px;font-weight:700;color:#2d8bcb;transform:scaleX(0.6481);">i</span>
<span class="t" style="left:1020px;top:216.32px;font-size:18.2px;font-weight:700;color:#2d8bcb;transform:scaleX(1.0350);">A</span>
<span class="t" style="left:1020.4px;top:235.22px;font-size:17.68px;font-weight:400;color:#3a3a3a;-webkit-text-stroke:0.4px #3a3a3a;transform:scaleX(1.0559);">Z</span>
<span class="t" style="left:1103.5px;top:215.81px;font-size:31.72px;font-weight:400;color:#3a3a3a;-webkit-text-stroke:0.3px #3a3a3a;transform:scaleX(1.2026);">¶</span>
<span class="t" style="left:297.05px;top:267.50px;font-size:17.89px;font-weight:400;color:#6a6a6a;transform:scaleX(0.9243);">1</span>
<span class="t" style="left:226.70000000000002px;top:267.50px;font-size:17.89px;font-weight:400;color:#6a6a6a;transform:scaleX(0.9243);">2</span>
<span class="t" style="left:156.35000000000002px;top:267.50px;font-size:17.89px;font-weight:400;color:#6a6a6a;transform:scaleX(0.9243);">3</span>
<span class="t" style="left:437.15px;top:267.50px;font-size:17.89px;font-weight:400;color:#6a6a6a;transform:scaleX(0.9243);">1</span>
<span class="t" style="left:507.5px;top:267.50px;font-size:17.89px;font-weight:400;color:#6a6a6a;transform:scaleX(0.9243);">2</span>
<span class="t" style="left:577.85px;top:267.50px;font-size:17.89px;font-weight:400;color:#6a6a6a;transform:scaleX(0.9243);">3</span>
<span class="t" style="left:648.2px;top:267.50px;font-size:17.89px;font-weight:400;color:#6a6a6a;transform:scaleX(0.9243);">4</span>
<span class="t" style="left:718.55px;top:267.50px;font-size:17.89px;font-weight:400;color:#6a6a6a;transform:scaleX(0.9243);">5</span>
<span class="t" style="left:788.9px;top:267.50px;font-size:17.89px;font-weight:400;color:#6a6a6a;transform:scaleX(0.9243);">6</span>
<span class="t" style="left:859.25px;top:267.50px;font-size:17.89px;font-weight:400;color:#6a6a6a;transform:scaleX(0.9243);">7</span>
<span class="t" style="left:929.5999999999999px;top:267.50px;font-size:17.89px;font-weight:400;color:#6a6a6a;transform:scaleX(0.9243);">8</span>
<span class="t" style="left:999.95px;top:267.50px;font-size:17.89px;font-weight:400;color:#6a6a6a;transform:scaleX(0.9243);">9</span>
<span class="t" style="left:1065.1999999999998px;top:267.50px;font-size:17.89px;font-weight:400;color:#6a6a6a;transform:scaleX(0.9753);">10</span>
<span class="t" style="left:1135.5499999999997px;top:267.50px;font-size:17.89px;font-weight:400;color:#6a6a6a;transform:scaleX(1.0451);">11</span>
<span class="t" style="left:1205.8999999999999px;top:267.50px;font-size:17.89px;font-weight:400;color:#6a6a6a;transform:scaleX(0.9753);">12</span>
<span class="t" style="left:1276.2499999999998px;top:267.50px;font-size:17.89px;font-weight:400;color:#6a6a6a;transform:scaleX(0.9753);">13</span>
<span class="t" style="left:1346.5999999999997px;top:267.50px;font-size:17.89px;font-weight:400;color:#6a6a6a;transform:scaleX(0.9753);">14</span>
<span class="t" style="left:1418.4499999999998px;top:267.50px;font-size:17.89px;font-weight:400;color:#6a6a6a;transform:scaleX(0.9753);">15</span>
<span class="t" style="left:1487.2999999999997px;top:267.50px;font-size:17.89px;font-weight:400;color:#6a6a6a;transform:scaleX(0.9753);">16</span>
<span class="t" style="left:1557.6499999999996px;top:267.50px;font-size:17.89px;font-weight:400;color:#6a6a6a;transform:scaleX(0.9753);">17</span>
</div></body></html>
